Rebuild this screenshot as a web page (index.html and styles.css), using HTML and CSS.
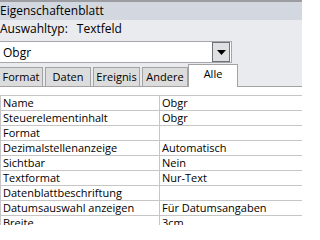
FILE: index.html
```html
<!DOCTYPE html>
<html>
<head>
<meta charset="utf-8">
<link rel="stylesheet" href="styles.css">
</head>
<body>
<div class="sheet">
  <div class="titlebar">Eigenschaftenblatt</div>
  <div class="typrow"><span>Auswahltyp:</span><span class="typval">Textfeld</span></div>
  <div class="panel">
    <div class="combo">
      <span class="combotext">Obgr</span>
      <span class="combobtn"><svg width="9" height="5" viewBox="0 0 9 5"><path d="M0 0H9L4.5 5Z" fill="#000"/></svg></span>
    </div>
    <div class="tabs">
      <div class="tab t1">Format</div>
      <div class="tab t2">Daten</div>
      <div class="tab t3">Ereignis</div>
      <div class="tab t4">Andere</div>
      <div class="tab active">Alle</div>
    </div>
  </div>
  <div class="content">
    <div class="grid">
      <div class="lbl">Name</div><div class="val">Obgr</div>
      <div class="lbl">Steuerelementinhalt</div><div class="val">Obgr</div>
      <div class="lbl">Format</div><div class="val"></div>
      <div class="lbl">Dezimalstellenanzeige</div><div class="val">Automatisch</div>
      <div class="lbl">Sichtbar</div><div class="val">Nein</div>
      <div class="lbl">Textformat</div><div class="val">Nur-Text</div>
      <div class="lbl">Datenblattbeschriftung</div><div class="val"></div>
      <div class="lbl">Datumsauswahl anzeigen</div><div class="val">Für Datumsangaben</div>
      <div class="lbl">Breite</div><div class="val">3cm</div>
    </div>
  </div>
</div>
</body>
</html>
```
FILE: styles.css
```css
html, body {
  margin: 0;
  padding: 0;
  background: #ffffff;
}
.sheet {
  width: 302px;
  height: 225px;
  overflow: hidden;
  font-family: "Open Sans", "Noto Sans", sans-serif;
  font-size: 11px;
  color: #000;
  background: #e9ebef;
}
.titlebar {
  height: 18px;
  border-top: 2px solid #9b9da2;
  background: #d3d7df;
  font-size: 12px;
  line-height: 18px;
  padding-left: 0;
}
.typrow {
  height: 18px;
  line-height: 17px;
  font-size: 12px;
  background: #e9ebef;
  display: flex;
}
.typval {
  margin-left: 9px;
}
.panel {
  padding-top: 3px;
  background: #e9ebef;
}
.combo {
  width: 231px;
  height: 20px;
  background: #fff;
  border: 1px solid #a5a7ab;
  border-left: none;
  display: flex;
  align-items: center;
  justify-content: space-between;
}
.combotext {
  padding-left: 3px;
  font-size: 12px;
}
.combobtn {
  width: 16px;
  height: 18px;
  margin-right: 1px;
  background: #dfe0e2;
  border: 1px solid #6f7175;
  display: flex;
  align-items: center;
  justify-content: center;
}
.tabs {
  margin-top: 3px;
  display: flex;
  align-items: flex-end;
  height: 20px;
}
.tab {
  height: 18px;
  line-height: 18px;
  background: #dcdcdc;
  border: 1px solid #a3a3a3;
  border-bottom: none;
  text-align: center;
  margin-right: 2px;
}
.t1 { width: 42px; border-left: none; }
.t2 { width: 44px; }
.t3 { width: 45px; }
.t4 { width: 44px; margin-right: 0; }
.tab.active {
  width: 48px;
  height: 22px;
  line-height: 18px;
  background: #fff;
  margin-bottom: -1px;
  position: relative;
}
.content {
  background: #fff;
  border-top: 1px solid #a3a3a3;
  padding-top: 8px;
}
.grid {
  display: grid;
  grid-template-columns: 160px 1fr;
  border-top: 1px solid #c6c6c6;
}
.lbl, .val {
  height: 14px;
  line-height: 14px;
  border-bottom: 1px solid #c6c6c6;
  white-space: nowrap;
}
.lbl {
  padding-left: 2px;
  border-right: 1px solid #c6c6c6;
  border-left: 1px solid #c6c6c6;
  box-sizing: content-box;
  width: 156px;
}
.val {
  padding-left: 2px;
}
```
